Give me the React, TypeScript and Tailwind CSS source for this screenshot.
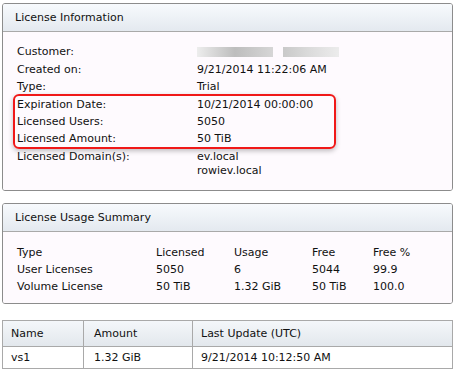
import React from "react";

const font = { fontFamily: '"DejaVu Sans", Verdana, sans-serif' };

function Panel({ title, children, className = "" }: { title: string; children: React.ReactNode; className?: string }) {
  return (
    <div className={`border border-[#8c8c8c] rounded-[3px] overflow-hidden ${className}`}>
      <div className="h-[28px] flex items-center px-[12px] bg-gradient-to-b from-[#f7fafd] to-[#e4e9ef] border-b border-[#a9a9a9]">
        {title}
      </div>
      <div className="bg-[#fefafe]">{children}</div>
    </div>
  );
}

const highlighted: [string, string][] = [
  ["Expiration Date:", "10/21/2014 00:00:00"],
  ["Licensed Users:", "5050"],
  ["Licensed Amount:", "50 TiB"],
];

const usage = [
  ["Type", "Licensed", "Usage", "Free", "Free %"],
  ["User Licenses", "5050", "6", "5044", "99.9"],
  ["Volume License", "50 TiB", "1.32 GiB", "50 TiB", "100.0"],
];

function Row({ label, children, className = "" }: { label: string; children: React.ReactNode; className?: string }) {
  return (
    <div className={`flex ${className}`}>
      <div className="w-[180px] shrink-0">{label}</div>
      <div>{children}</div>
    </div>
  );
}

export default function App() {
  return (
    <div className="w-[458px] h-[371px] bg-white text-[#111] text-[11px] leading-[17px] overflow-hidden pt-[3px] pl-[2px] pr-[5px]" style={font}>
      <Panel title="License Information">
        <div className="pt-[10px] pb-[13px] pl-[14px]">
          <Row label="Customer:" className="h-[19px] items-center">
            <div className="flex gap-[10px] items-center">
              <div className="w-[76px] h-[10px] bg-gradient-to-r from-[#ededed] via-[#bdbdbd] to-[#d6d6d6]" />
              <div className="w-[56px] h-[10px] bg-gradient-to-r from-[#c9c9c9] via-[#dcdcdc] to-[#ececec]" />
            </div>
          </Row>
          <Row label="Created on:" className="leading-[18px]">9/21/2014 11:22:06 AM</Row>
          <Row label="Type:" className="leading-[15px]">Trial</Row>
          <div className="-ml-[4px] w-[323px] border-2 border-[#f01818] rounded-[6px] pl-[2px] shadow-[0_2px_5px_rgba(0,0,0,0.25)]">
            {highlighted.map(([l, v]) => (
              <div key={l} className="flex">
                <div className="w-[180px] shrink-0">{l}</div>
                <div>{v}</div>
              </div>
            ))}
          </div>
          <div className="flex leading-[16px]">
            <div className="w-[180px] shrink-0">Licensed Domain(s):</div>
            <div>
              <div>ev.local</div>
              <div className="leading-[12px]">rowiev.local</div>
            </div>
          </div>
        </div>
      </Panel>

      <Panel title="License Usage Summary" className="mt-[12px]">
        <div className="pt-[12px] pb-[8px] pl-[14px]">
          {usage.map((r) => (
            <div key={r[0]} className="grid grid-cols-[139px_78px_78px_61px_1fr]">
              {r.map((c, i) => (
                <div key={i}>{c}</div>
              ))}
            </div>
          ))}
        </div>
      </Panel>

      <table className="mt-[16px] w-full border-collapse border border-[#8c8c8c]">
        <thead>
          <tr className="bg-gradient-to-b from-[#f4f7fa] to-[#e2e7ec] h-[26px]">
            <th className="w-[81px] text-left font-normal pl-[8px] border border-[#a9a9a9]">Name</th>
            <th className="w-[109px] text-left font-normal pl-[10px] border border-[#a9a9a9]">Amount</th>
            <th className="text-left font-normal pl-[8px] border border-[#a9a9a9]">Last Update (UTC)</th>
          </tr>
        </thead>
        <tbody>
          <tr className="h-[22px] bg-white">
            <td className="pl-[8px] border border-[#a9a9a9]">vs1</td>
            <td className="pl-[10px] border border-[#a9a9a9]">1.32 GiB</td>
            <td className="pl-[8px] border border-[#a9a9a9]">9/21/2014 10:12:50 AM</td>
          </tr>
        </tbody>
      </table>
    </div>
  );
}
